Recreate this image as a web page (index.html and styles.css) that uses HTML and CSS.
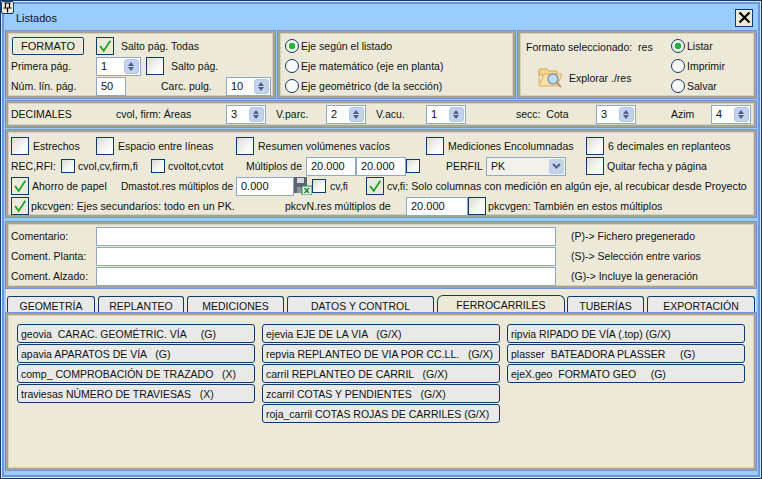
FILE: index.html
```html
<!DOCTYPE html>
<html lang="es">
<head>
    <meta charset="UTF-8">
    <title>Listados</title>
    <link rel="stylesheet" href="styles.css">
</head>
<body>
<div class="window">
    <div class="pin">
        <svg width="11" height="11" viewBox="0 0 11 11"><path d="M2.500 1h6M3.500 1v5M7.500 1v5M1.500 6h8M5.500 6v4.500" fill="none" stroke="#000" stroke-width="1.200"/></svg>
    </div>
    <div class="titlebar">
        <span>Listados</span>
        <div class="close">
            <svg width="13" height="13" viewBox="0 0 13 13"><path d="M1.500 1.500l10 10M11.500 1.500l-10 10" stroke="#000" stroke-width="2.200"/></svg>
        </div>
    </div>

    <div class="top-row">
        <section class="panel formato">
            <div class="row r-formato1">
                <button class="btn-formato">FORMATO</button>
                <span class="check on"><svg viewBox="0 0 18 18"><path d="M3.500 9l4 5.500L15 3" fill="none" stroke="#1aa32a" stroke-width="2"/></svg></span>
                <span>Salto pág. Todas</span>
            </div>
            <div class="row r-formato2">
                <span>Primera pág.</span>
                <span class="spin wide"><b>1</b><i class="arrows"></i></span>
                <span class="check"></span>
                <span>Salto pág.</span>
            </div>
            <div class="row r-formato3">
                <span>Núm. lín. pág.</span>
                <span class="field short">50</span>
                <span>Carc. pulg.</span>
                <span class="spin wide"><b>10</b><i class="arrows"></i></span>
            </div>
        </section>

        <section class="panel ejes">
            <label class="radio-line"><span class="radio on"></span>Eje según el listado</label>
            <label class="radio-line"><span class="radio"></span>Eje matemático (eje en planta)</label>
            <label class="radio-line"><span class="radio"></span>Eje geométrico (de la sección)</label>
        </section>

        <section class="panel salida">
            <div class="salida-left">
                <div>Formato seleccionado:&nbsp; res</div>
                <div class="explorar">
                    <svg width="27" height="25" viewBox="0 0 27 25">
                        <path d="M1 4h8l2 2h8v4H1z" fill="#f3d58e" stroke="#d9a860"/>
                        <path d="M1 6v15h18l5-12H6L2 19" fill="#fbe3a8" stroke="#dba964"/>
                        <circle cx="15" cy="14" r="5" fill="#bfdcf0" stroke="#7d97ad" stroke-width="1.500"/>
                        <path d="M19 18l4 4" stroke="#c98a5a" stroke-width="2"/>
                    </svg>
                    <span>Explorar ./res</span>
                </div>
            </div>
            <div class="salida-right">
                <label class="radio-line"><span class="radio on"></span>Listar</label>
                <label class="radio-line"><span class="radio"></span>Imprimir</label>
                <label class="radio-line"><span class="radio"></span>Salvar</label>
            </div>
        </section>
    </div>

    <section class="panel decimales">
        <span>DECIMALES</span>
        <span>cvol, firm: Áreas</span>
        <span class="spin"><b>3</b><i class="arrows"></i></span>
        <span>V.parc.</span>
        <span class="spin"><b>2</b><i class="arrows"></i></span>
        <span>V.acu.</span>
        <span class="spin"><b>1</b><i class="arrows"></i></span>
        <span>secc:&nbsp; Cota</span>
        <span class="spin"><b>3</b><i class="arrows"></i></span>
        <span>Azim</span>
        <span class="spin"><b>4</b><i class="arrows"></i></span>
    </section>

    <section class="panel opciones">
        <div class="row o1">
            <span class="check"></span><span>Estrechos</span>
            <span class="check"></span><span>Espacio entre líneas</span>
            <span class="check"></span><span>Resumen volúmenes vacíos</span>
            <span class="check"></span><span>Mediciones Encolumnadas</span>
            <span class="check"></span><span>6 decimales en replanteos</span>
        </div>
        <div class="row o2">
            <span>REC,RFI:</span>
            <span class="check small"></span><span>cvol,cv,firm,fi</span>
            <span class="check small"></span><span>cvoltot,cvtot</span>
            <span>Múltiplos de</span>
            <span class="field num">20.000</span>
            <span class="field num">20.000</span>
            <span class="check small"></span>
            <span>PERFIL</span>
            <span class="select"><b>PK</b><i class="drop"><svg width="9" height="6" viewBox="0 0 9 6"><path d="M1 1l3.500 3.500L8 1" fill="none" stroke="#4d6185" stroke-width="2"/></svg></i></span>
            <span class="check"></span><span>Quitar fecha y página</span>
        </div>
        <div class="row o3">
            <span class="check on"><svg viewBox="0 0 18 18"><path d="M3.500 9l4 5.500L15 3" fill="none" stroke="#1aa32a" stroke-width="2"/></svg></span>
            <span>Ahorro de papel</span>
            <span class="tight">Dmastot.res múltiplos de</span>
            <span class="field num">0.000</span>
            <svg class="xls" width="18" height="18" viewBox="0 0 18 18">
                <path d="M0 0h13v16H0z" fill="#5b6470"/>
                <path d="M3 1h7v5H3z" fill="#d5d9de"/>
                <path d="M3 10h8v6H3z" fill="#8d949c"/>
                <path d="M8 9h10v9H8z" fill="#e9f3ea" stroke="#2f8a4a"/>
                <path d="M10.500 11l4.500 5M15 11l-4.500 5" stroke="#1f7a3a" stroke-width="1.400"/>
            </svg>
            <span class="check small"></span><span>cv,fi</span>
            <span class="check on"><svg viewBox="0 0 18 18"><path d="M3.500 9l4 5.500L15 3" fill="none" stroke="#1aa32a" stroke-width="2"/></svg></span>
            <span class="loose">cv,fi: Solo columnas con medición en algún eje, al recubicar desde Proyecto</span>
        </div>
        <div class="row o4">
            <span class="check on"><svg viewBox="0 0 18 18"><path d="M3.500 9l4 5.500L15 3" fill="none" stroke="#1aa32a" stroke-width="2"/></svg></span>
            <span class="loose">pkcvgen: Ejes secundarios: todo en un PK.</span>
            <span>pkcvN.res múltiplos de</span>
            <span class="field num">20.000</span>
            <span class="check"></span>
            <span class="loose">pkcvgen: También en estos múltiplos</span>
        </div>
    </section>

    <section class="panel comentarios">
        <div class="row c1"><span>Comentario:</span><span class="field"></span><span>(P)-&gt; Fichero pregenerado</span></div>
        <div class="row c1"><span>Coment. Planta:</span><span class="field"></span><span>(S)-&gt; Selección entre varios</span></div>
        <div class="row c1"><span>Coment. Alzado:</span><span class="field"></span><span>(G)-&gt; Incluye la generación</span></div>
    </section>

    <nav class="tabs">
        <a class="t1">GEOMETRÍA</a>
        <a class="t2">REPLANTEO</a>
        <a class="t3">MEDICIONES</a>
        <a class="t4">DATOS Y CONTROL</a>
        <a class="t5 active">FERROCARRILES</a>
        <a class="t6">TUBERÍAS</a>
        <a class="t7">EXPORTACIÓN</a>
    </nav>
    <section class="panel tab-body">
        <div class="col">
            <a class="item">geovia&nbsp; CARAC. GEOMÉTRIC. VÍA &nbsp; &nbsp; (G)</a>
            <a class="item">apavia APARATOS DE VÍA &nbsp; (G)</a>
            <a class="item">comp_ COMPROBACIÓN DE TRAZADO &nbsp; (X)</a>
            <a class="item">traviesas NÚMERO DE TRAVIESAS &nbsp; (X)</a>
        </div>
        <div class="col">
            <a class="item">ejevia EJE DE LA VIA &nbsp; (G/X)</a>
            <a class="item">repvia REPLANTEO DE VIA POR CC.LL. &nbsp; (G/X)</a>
            <a class="item">carril REPLANTEO DE CARRIL &nbsp; (G/X)</a>
            <a class="item">zcarril COTAS Y PENDIENTES &nbsp; (G/X)</a>
            <a class="item">roja_carril COTAS ROJAS DE CARRILES (G/X)</a>
        </div>
        <div class="col">
            <a class="item">ripvia RIPADO DE VÍA (.top) (G/X)</a>
            <a class="item">plasser&nbsp; BATEADORA PLASSER &nbsp; &nbsp; (G)</a>
            <a class="item">ejeX.geo&nbsp; FORMATO GEO &nbsp; &nbsp; (G)</a>
        </div>
    </section>
</div>
</body>
</html>
```

FILE: styles.css
```css
* { box-sizing: border-box; }

body {
    margin: 0;
    width: 762px;
    height: 479px;
    overflow: hidden;
    font-family: "Liberation Sans", Arial, sans-serif;
    font-size: 10.5px;
    color: #111;
    background: #fff;
}

.window {
    position: relative;
    width: 762px;
    height: 479px;
    padding: 5px 5px 1px 5px;
    background: #99ccff;
    border: 1px solid #0b3b6e;
    box-shadow: inset 0 0 0 1px #d7e6fa, inset 0 0 0 3px #6f94dc;
}

.pin {
    position: absolute;
    left: 0;
    top: 0;
    width: 13px;
    height: 13px;
    background: #ece9d8;
    border: 1px solid #0b3b6e;
    border-radius: 2px;
}
.pin svg { display: block; }

.titlebar {
    height: 23px;
    padding: 0 3px 0 10px;
    font-size: 11px;
    display: flex;
    align-items: center;
    justify-content: space-between;
}
.close {
    width: 18px;
    height: 18px;
    background: #ece9d8;
    border: 1px solid #0b3b6e;
    display: flex;
    align-items: center;
    justify-content: center;
}
.close svg { display: block; }

/* panels */
.panel {
    background: #ece9d8;
    border: 2px solid #a8a290;
    box-shadow: inset 0 0 0 1px #d4cfbe;
    outline: 1px solid #6f94dc;
}

.top-row {
    display: flex;
    gap: 3px;
    margin-top: 2px;
    height: 67px;
}
.formato { width: 269px; padding: 3px 0 0 3px; }
.ejes { width: 237px; padding: 3px 0 0 5px; }
.salida { width: 238px; padding: 3px 0 0 6px; display: flex; }

.row {
    display: grid;
    align-items: center;
    white-space: nowrap;
}

.formato .row { height: 20px; }
.r-formato1 { grid-template-columns: 85px 25px 1fr; }
.r-formato2 { grid-template-columns: 85px 50px 25px 1fr; }
.r-formato3 { grid-template-columns: 85px 65px 65px 45px; }

.btn-formato {
    width: 72px;
    height: 18px;
    margin-left: 1px;
    padding: 0;
    font: inherit;
    font-size: 11px;
    color: #111;
    background: #ece9d8;
    border: 1px solid #0b3b6e;
    border-radius: 2px;
    box-shadow: inset 0 0 0 1px #f5f4ee;
}

.check {
    display: block;
    width: 18px;
    height: 18px;
    border: 1px solid #0b3b6e;
    background: linear-gradient(135deg, #dcdad0, #f8f8f4 60%, #fff);
}
.check.on { background: #ece9d8; }
.check svg { display: block; width: 16px; height: 16px; }
.check.small { width: 14px; height: 14px; }

.field {
    display: flex;
    align-items: center;
    height: 19px;
    padding-left: 4px;
    font-size: 11px;
    background: #fff;
    border: 1px solid #8ea8c9;
}
.field.short { width: 30px; }

.spin {
    display: flex;
    align-items: center;
    justify-content: space-between;
    width: 40px;
    height: 19px;
    padding: 1px 1px 1px 4px;
    font-size: 11px;
    background: #fff;
    border: 1px solid #8ea8c9;
}
.spin.wide { width: 45px; }
.spin b { font-weight: normal; }

.arrows {
    position: relative;
    display: block;
    width: 15px;
    height: 15px;
    background: #c3d3ee;
    border: 1px solid #b4c6e4;
    border-radius: 3px;
}
.arrows::before, .arrows::after {
    content: "";
    position: absolute;
    left: 3px;
    border-left: 3.5px solid transparent;
    border-right: 3.5px solid transparent;
}
.arrows::before { top: 2px; border-bottom: 4px solid #4d6185; }
.arrows::after { bottom: 2px; border-top: 4px solid #4d6185; }

.radio-line {
    display: flex;
    align-items: center;
    height: 20px;
    gap: 2px;
}
.radio {
    display: block;
    width: 14px;
    height: 14px;
    border: 1.5px solid #123a63;
    border-radius: 50%;
    background: #f8f8f4;
}
.radio.on { background: radial-gradient(circle, #22b43a 0 3px, #eef3e6 3.5px); }

.salida-left { width: 145px; padding-top: 5px; }
.explorar {
    display: flex;
    align-items: center;
    gap: 4px;
    margin: 12px 0 0 12px;
}

.decimales {
    display: grid;
    grid-template-columns: 105px 110px 50px 50px 50px 50px 90px 80px 75px 40px 40px;
    align-items: center;
    height: 26px;
    margin-top: 3px;
    padding-left: 3px;
}

.opciones {
    height: 87px;
    margin-top: 3px;
    padding: 4px 0 0 3px;
}
.opciones .row { height: 20px; }
.o1 { grid-template-columns: 22px 63px 22px 118px 22px 168px 22px 138px 22px 1fr; }
.o2 { grid-template-columns: 50px 17px 73px 17px 78px 60px 50px 50px 40px 40px 100px 21px 1fr; }
.o3 { grid-template-columns: 21px 89px 115px 58px 18px 18px 36px 21px 1fr; }
.o4 { grid-template-columns: 20px 254px 121px 62px 20px 1fr; }
.tight { font-size: 10.2px; }
.loose { font-size: 10.7px; }

.select {
    display: flex;
    align-items: center;
    justify-content: space-between;
    width: 80px;
    height: 19px;
    padding: 1px 1px 1px 4px;
    background: #f2f1ea;
    border: 1px solid #8ea8c9;
}
.select b { font-weight: normal; }
.drop {
    display: flex;
    align-items: center;
    justify-content: center;
    width: 15px;
    height: 15px;
    background: #c3d3ee;
    border-radius: 2px;
}

.comentarios {
    height: 66px;
    margin-top: 5px;
    padding: 2px 0 0 3px;
}
.c1 { grid-template-columns: 85px 460px 1fr; height: 20px; }
.c1 span:last-child { padding-left: 15px; }

/* tabs */
.tabs {
    display: flex;
    align-items: flex-end;
    gap: 3px;
    height: 25px;
    padding-left: 1px;
    font-size: 10.5px;
    background: #ece9d8;
}
.tabs a {
    height: 17px;
    display: flex;
    align-items: center;
    justify-content: center;
    padding-top: 1px;
    background: #e9e9e9;
    border: 1px solid #0b3b6e;
    border-bottom: 0;
    border-radius: 3px 3px 0 0;
}
.tabs a.active {
    height: 18px;
    margin-right: -1px;
    background: #ece9d8;
    border-radius: 6px 6px 0 0;
}
.t1 { width: 88px; }
.t2 { width: 86px; }
.t3 { width: 97px; }
.t4 { width: 147px; }
.t5 { width: 128px; }
.t6 { width: 77px; }
.t7 { width: 108px; }

.tab-body {
    display: flex;
    gap: 7px;
    height: 157px;
    padding: 9px 0 0 9px;
}
.col { width: 238px; display: flex; flex-direction: column; gap: 1px; }
.item {
    display: flex;
    align-items: center;
    height: 19px;
    padding-left: 3px;
    white-space: pre;
    font-size: 10.5px;
    background: #e9e9e9;
    border: 1px solid #0b3b6e;
    border-radius: 3px;
}
```
